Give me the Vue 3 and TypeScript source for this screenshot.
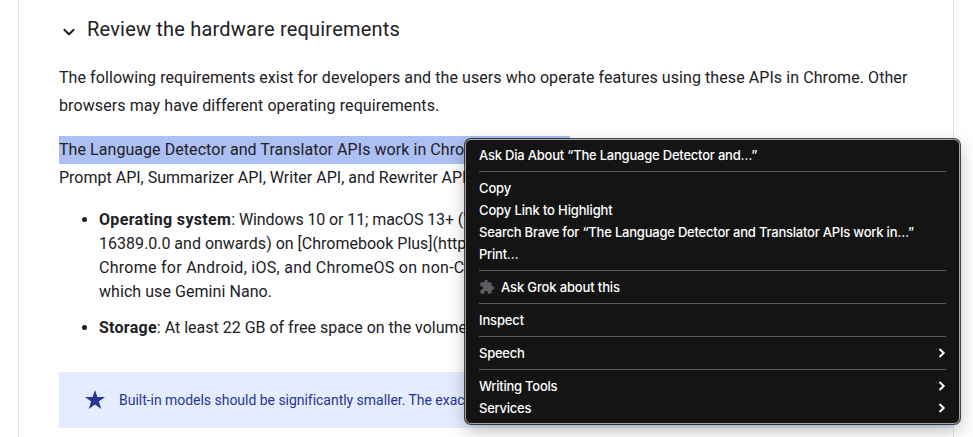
<script setup lang="ts">
interface MenuItem {
  label: string
  key: string
  icon?: boolean
  submenu?: boolean
}

const groups: MenuItem[][] = [
  [{ label: 'Ask Dia About “The Language Detector and…”', key: 'dia' }],
  [
    { label: 'Copy', key: 'copy' },
    { label: 'Copy Link to Highlight', key: 'link' },
    { label: 'Search Brave for “The Language Detector and Translator APIs work in…”', key: 'search' },
    { label: 'Print…', key: 'print' },
  ],
  [{ label: 'Ask Grok about this', key: 'grok', icon: true }],
  [{ label: 'Inspect', key: 'inspect' }],
  [{ label: 'Speech', key: 'speech', submenu: true }],
  [
    { label: 'Writing Tools', key: 'writing', submenu: true },
    { label: 'Services', key: 'services', submenu: true },
  ],
]
</script>

<template>
  <div class="page">
    <main class="panel">
      <h3 class="heading">
        <svg class="chevron" width="20" height="20" viewBox="0 0 20 20">
          <path d="M4.8 8.3 10 13.3l5.2-5" />
        </svg>
        <span>Review the hardware requirements</span>
      </h3>
      <p class="para">
        <span class="line l1">The following requirements exist for developers and the users who operate features using these APIs in Chrome. Other</span>
        <span class="line l2">browsers may have different operating requirements.</span>
      </p>
      <p class="para">
        <span class="line l3"><mark>The Language Detector and Translator APIs work in Chro</mark></span>
        <span class="line l4">Prompt API, Summarizer API, Writer API, and Rewriter API</span>
      </p>
      <ul class="list">
        <li>
          <span class="line l5"><b>Operating system</b>: Windows 10 or 11; macOS 13+ (V</span>
          <span class="line l6">16389.0.0 and onwards) on [Chromebook Plus](http</span>
          <span class="line l7">Chrome for Android, iOS, and ChromeOS on non-C</span>
          <span class="line l8">which use Gemini Nano.</span>
        </li>
        <li>
          <span class="line l9"><b>Storage</b>: At least 22 GB of free space on the volume</span>
        </li>
      </ul>
      <aside class="callout">
        <svg width="20" height="19" viewBox="0 0 20 19">
          <path d="M10 0 12.4 7.1H20L13.9 11.6 16.2 19 10 14.6 3.8 19 6.1 11.6 0 7.1H7.6Z" />
        </svg>
        <span class="note">Built-in models should be significantly smaller. The exac</span>
      </aside>
    </main>

    <div class="menu">
      <div v-for="(group, i) in groups" :key="i" class="group">
        <div v-for="item in group" :key="item.key" class="item">
          <svg v-if="item.icon" class="puzzle" width="16" height="16" viewBox="0 0 24 24">
            <path d="M20.5 11H19V7c0-1.1-.9-2-2-2h-4V3.500a2.500 2.500 0 0 0-5 0V5H4c-1.100 0-2 .9-2 2v3.800h1.500a2.700 2.700 0 0 1 0 5.400H2V20c0 1.100.9 2 2 2h3.800v-1.500a2.700 2.700 0 0 1 5.400 0V22H17c1.100 0 2-.9 2-2v-4h1.500a2.500 2.500 0 0 0 0-5z" />
          </svg>
          <span class="label" :class="item.key">{{ item.label }}</span>
          <svg v-if="item.submenu" class="arrow" width="8" height="12" viewBox="0 0 8 12">
            <path d="M1.500 2 5.700 6 1.500 10" />
          </svg>
        </div>
      </div>
    </div>
  </div>
</template>

<style>
body {
  margin: 0;
  background: #fff;
}
</style>

<style scoped>
.page {
  position: relative;
  width: 973px;
  height: 437px;
  overflow: hidden;
  box-sizing: border-box;
  padding-left: 18px;
  background: #fff;
  color: #202124;
  font-family: Roboto, "Liberation Sans", sans-serif;
}
.panel {
  box-sizing: border-box;
  width: 936px;
  height: 437px;
  padding: 13px 40px 0;
  border: solid #d7e3f8;
  border-width: 0 1px;
}
.heading {
  display: flex;
  align-items: center;
  gap: 8px;
  height: 32px;
  margin: 0 0 19px;
  font-size: 20px;
  font-weight: 400;
  line-height: 32px;
  white-space: nowrap;
}
.heading span {
  letter-spacing: 0.2px;
}
.chevron {
  margin-top: 3px;
}
.chevron path {
  fill: none;
  stroke: #202124;
  stroke-width: 2;
}
.para {
  margin: 0 0 16px;
  font-size: 16px;
  line-height: 28px;
}
.line {
  display: block;
  width: max-content;
  white-space: nowrap;
}
.l1 { letter-spacing: 0.075px; }
.l2 { letter-spacing: 0.1px; }
.l3 { letter-spacing: 0.06px; }
.l5 { letter-spacing: -0.1px; }
.l5 b { letter-spacing: 0.33px; }
.l6 { letter-spacing: 0; }
.l7 { letter-spacing: 0.27px; }
.l8 { letter-spacing: 0.06px; }
.l9 b { letter-spacing: 0.25px; }
.note { letter-spacing: -0.03px; }
mark {
  display: block;
  box-sizing: border-box;
  width: 511px;
  height: 28px;
  background: #adc0f3;
  color: inherit;
}
.list {
  margin: 0;
  padding: 0 0 0 40px;
  font-size: 16px;
  line-height: 24px;
}
.list li {
  margin-bottom: 12px;
}
.callout {
  display: flex;
  align-items: center;
  gap: 14px;
  box-sizing: border-box;
  height: 56px;
  margin: 32px -40px 0 0;
  padding-left: 26px;
  background: #e3edff;
  color: #283593;
  font-size: 14px;
  white-space: nowrap;
}
.callout svg {
  position: relative;
  top: -1px;
  fill: #283593;
}
.menu {
  position: absolute;
  top: 139px;
  left: 465px;
  box-sizing: border-box;
  width: 495px;
  height: 285px;
  padding: 4px 13px;
  border: 1px solid #a5a5a5;
  border-radius: 6px;
  background: #141414;
  box-shadow: 0 0 0 1px rgba(0, 0, 0, 0.7), 0 6px 18px rgba(0, 0, 0, 0.28);
  color: #fff;
  font-family: Inter, "Liberation Sans", sans-serif;
  font-size: 13px;
  font-weight: 500;
  letter-spacing: -0.14px;
}
.dia,
.search {
  letter-spacing: -0.215px;
}
.print,
.speech,
.writing,
.services {
  letter-spacing: -0.25px;
}
.group + .group::before {
  content: "";
  display: block;
  height: 1px;
  margin: 5px 0;
  background: #5c5c5c;
}
.item {
  display: flex;
  align-items: center;
  height: 22px;
  white-space: nowrap;
}
.puzzle {
  margin-right: 6px;
  fill: #5b5e63;
}
.arrow {
  margin-left: auto;
}
.arrow path {
  fill: none;
  stroke: #f8f8f8;
  stroke-width: 2;
}
</style>
